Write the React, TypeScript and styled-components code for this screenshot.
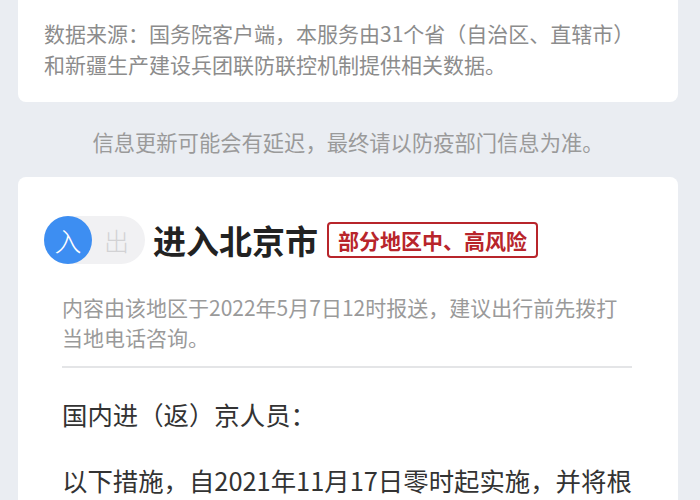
import React from 'react';
import styled, { createGlobalStyle } from 'styled-components';

const GlobalStyle = createGlobalStyle`
  html, body {
    margin: 0;
    padding: 0;
    background: #eaedf2;
  }
  body {
    font-family: "Noto Sans CJK SC", "Noto Sans", sans-serif;
    overflow: hidden;
  }
`;

const Page = styled.div`
  width: 660px;
  margin-left: 18px;
  height: 500px;
  overflow: hidden;
`;

const Card = styled.div<{ $cropped?: boolean }>`
  background: #ffffff;
  border-radius: 8px;
  margin-top: ${({ $cropped }) => ($cropped ? '-12px' : '0')};
`;

const SourceText = styled.p`
  margin: 0;
  padding: 30px 24px 22px 26px;
  font-size: 21px;
  line-height: 31px;
  color: #8c8c8c;
`;

const Notice = styled.p`
  margin: 0;
  padding: 24px 0 20px;
  text-align: center;
  font-size: 21.3px;
  line-height: 31px;
  color: #9a9a9a;
`;

const HeaderRow = styled.div`
  display: flex;
  align-items: center;
  padding: 39px 0 0 26px;
`;

const Toggle = styled.div`
  display: flex;
  align-items: center;
  width: 101px;
  height: 48px;
  border-radius: 24px;
  background: #f1f1f3;
`;

const ToggleKnob = styled.div`
  width: 48px;
  height: 48px;
  border-radius: 50%;
  background: #3d8ef2;
  color: #ffffff;
  font-size: 27px;
  font-weight: 300;
  display: flex;
  align-items: center;
  justify-content: center;
`;

const ToggleLabel = styled.div`
  flex: 1;
  text-align: center;
  font-size: 25px;
  font-weight: 300;
  color: #d2d2d4;
  padding-right: 4px;
`;

const Title = styled.h1`
  margin: 0 0 0 8px;
  font-size: 33px;
  font-weight: 700;
  color: #222222;
`;

const RiskBadge = styled.span`
  margin-left: 9px;
  height: 32px;
  padding: 0 9px;
  display: flex;
  align-items: center;
  border: 2px solid #b8252b;
  border-radius: 4px;
  font-size: 21px;
  font-weight: 700;
  color: #b8252b;
`;

const Body = styled.div`
  padding: 28px 46px 0 44px;
`;

const ReportNote = styled.p`
  margin: 0;
  font-size: 21px;
  line-height: 30px;
  color: #9a9a9a;
`;

const Divider = styled.hr`
  margin: 14px 0 0;
  border: none;
  height: 2px;
  background: #e4e5e7;
`;

const Paragraph = styled.p<{ $gap?: number }>`
  margin: ${({ $gap }) => $gap ?? 30}px 0 0;
  font-size: 25.4px;
  line-height: 33px;
  color: #333333;
`;

export default function App() {
  return (
    <>
      <GlobalStyle />
      <Page>
        <Card $cropped>
          <SourceText>
            数据来源：国务院客户端，本服务由31个省（自治区、直辖市）和新疆生产建设兵团联防联控机制提供相关数据。
          </SourceText>
        </Card>
        <Notice>信息更新可能会有延迟，最终请以防疫部门信息为准。</Notice>
        <Card>
          <HeaderRow>
            <Toggle>
              <ToggleKnob>入</ToggleKnob>
              <ToggleLabel>出</ToggleLabel>
            </Toggle>
            <Title>进入北京市</Title>
            <RiskBadge>部分地区中、高风险</RiskBadge>
          </HeaderRow>
          <Body>
            <ReportNote>
              内容由该地区于2022年5月7日12时报送，建议出行前先拨打当地电话咨询。
            </ReportNote>
            <Divider />
            <Paragraph>国内进（返）京人员：</Paragraph>
            <Paragraph $gap={33}>
              以下措施，自2021年11月17日零时起实施，并将根据疫情形势动态调整。
            </Paragraph>
          </Body>
        </Card>
      </Page>
    </>
  );
}
